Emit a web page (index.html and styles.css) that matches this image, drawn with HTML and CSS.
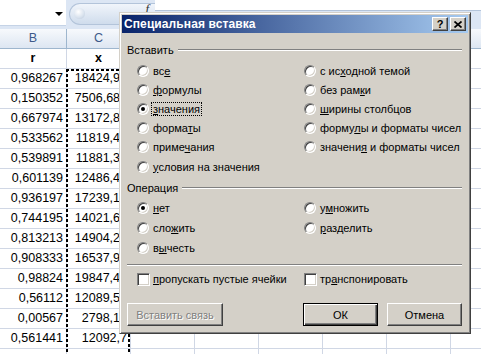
FILE: index.html
```html
<!DOCTYPE html>
<html lang="ru">
<head>
<meta charset="utf-8">
<title>Специальная вставка</title>
<link rel="stylesheet" href="styles.css">
</head>
<body>
<div class="sheet">
  <div class="topbar">
    <div class="namebox"><span class="dd"></span></div>
    <div class="fxbar"><span class="knob"></span><span class="fx">f</span></div>
    <div class="formula"></div>
  </div>
  <div class="row head">
    <div class="c cb">B</div><div class="c cc">C</div><div class="c"></div><div class="c"></div><div class="c"></div><div class="c"></div><div class="c"></div><div class="c"></div>
  </div>
  <div class="row"><div class="c cb bold">r</div><div class="c cc bold">x</div><div class="c"></div><div class="c"></div><div class="c"></div><div class="c"></div><div class="c"></div><div class="c"></div></div>
  <div class="row"><div class="c cb">0,968267</div><div class="c cc">18424,92</div><div class="c"></div><div class="c"></div><div class="c"></div><div class="c"></div><div class="c"></div><div class="c"></div></div>
  <div class="row"><div class="c cb">0,150352</div><div class="c cc">7506,683</div><div class="c"></div><div class="c"></div><div class="c"></div><div class="c"></div><div class="c"></div><div class="c"></div></div>
  <div class="row"><div class="c cb">0,667974</div><div class="c cc">13172,81</div><div class="c"></div><div class="c"></div><div class="c"></div><div class="c"></div><div class="c"></div><div class="c"></div></div>
  <div class="row"><div class="c cb">0,533562</div><div class="c cc">11819,45</div><div class="c"></div><div class="c"></div><div class="c"></div><div class="c"></div><div class="c"></div><div class="c"></div></div>
  <div class="row"><div class="c cb">0,539891</div><div class="c cc">11881,37</div><div class="c"></div><div class="c"></div><div class="c"></div><div class="c"></div><div class="c"></div><div class="c"></div></div>
  <div class="row"><div class="c cb">0,601139</div><div class="c cc">12486,42</div><div class="c"></div><div class="c"></div><div class="c"></div><div class="c"></div><div class="c"></div><div class="c"></div></div>
  <div class="row"><div class="c cb">0,936197</div><div class="c cc">17239,16</div><div class="c"></div><div class="c"></div><div class="c"></div><div class="c"></div><div class="c"></div><div class="c"></div></div>
  <div class="row"><div class="c cb">0,744195</div><div class="c cc">14021,61</div><div class="c"></div><div class="c"></div><div class="c"></div><div class="c"></div><div class="c"></div><div class="c"></div></div>
  <div class="row"><div class="c cb">0,813213</div><div class="c cc">14904,25</div><div class="c"></div><div class="c"></div><div class="c"></div><div class="c"></div><div class="c"></div><div class="c"></div></div>
  <div class="row"><div class="c cb">0,908333</div><div class="c cc">16537,95</div><div class="c"></div><div class="c"></div><div class="c"></div><div class="c"></div><div class="c"></div><div class="c"></div></div>
  <div class="row"><div class="c cb">0,98824</div><div class="c cc">19847,48</div><div class="c"></div><div class="c"></div><div class="c"></div><div class="c"></div><div class="c"></div><div class="c"></div></div>
  <div class="row"><div class="c cb">0,56112</div><div class="c cc">12089,53</div><div class="c"></div><div class="c"></div><div class="c"></div><div class="c"></div><div class="c"></div><div class="c"></div></div>
  <div class="row"><div class="c cb">0,00567</div><div class="c cc">2798,15</div><div class="c"></div><div class="c"></div><div class="c"></div><div class="c"></div><div class="c"></div><div class="c"></div></div>
  <div class="row"><div class="c cb">0,561441</div><div class="c cc">12092,7</div><div class="c"></div><div class="c"></div><div class="c"></div><div class="c"></div><div class="c"></div><div class="c"></div></div>
  <div class="row"><div class="c cb"></div><div class="c cc"></div><div class="c"></div><div class="c"></div><div class="c"></div><div class="c"></div><div class="c"></div><div class="c"></div></div>
</div>
<div class="ants"></div>

<div class="dialog">
  <div class="titlebar">
    <span class="ttext">Специальная вставка</span>
    <span class="tbtn help">?</span>
    <span class="tbtn close"><svg width="8" height="7" viewBox="0 0 8 7"><path d="M0.5 0.5 L7.5 6.5 M7.5 0.5 L0.5 6.5" stroke="#000" stroke-width="1.7" fill="none"/></svg></span>
  </div>
  <div class="body">
    <div class="legend">Вставить</div>
    <div class="opts paste">
      <label class="opt"><span class="radio"></span><span>вс<u>е</u></span></label>
      <label class="opt"><span class="radio"></span><span><u>ф</u>ормулы</span></label>
      <label class="opt"><span class="radio on"></span><span class="focus"><u>з</u>начения</span></label>
      <label class="opt"><span class="radio"></span><span>форма<u>т</u>ы</span></label>
      <label class="opt"><span class="radio"></span><span>приме<u>ч</u>ания</span></label>
      <label class="opt"><span class="radio"></span><span><u>у</u>словия на значения</span></label>
      <label class="opt"><span class="radio"></span><span>с ис<u>х</u>одной темой</span></label>
      <label class="opt"><span class="radio"></span><span>без рам<u>к</u>и</span></label>
      <label class="opt"><span class="radio"></span><span><u>ш</u>ирины столбцов</span></label>
      <label class="opt"><span class="radio"></span><span>форму<u>л</u>ы и форматы чисел</span></label>
      <label class="opt"><span class="radio"></span><span>значени<u>я</u> и форматы чисел</span></label>
    </div>
    <div class="legend op">Операция</div>
    <div class="opts ops">
      <label class="opt"><span class="radio on"></span><span><u>н</u>ет</span></label>
      <label class="opt"><span class="radio"></span><span>сло<u>ж</u>ить</span></label>
      <label class="opt"><span class="radio"></span><span>в<u>ы</u>честь</span></label>
      <label class="opt"><span class="radio"></span><span>у<u>м</u>ножить</span></label>
      <label class="opt"><span class="radio"></span><span><u>р</u>азделить</span></label>
    </div>
    <div class="sep"></div>
    <div class="opts checks">
      <label class="opt chk"><span class="box"></span><span><u>п</u>ропускать пустые ячейки</span></label>
      <label class="opt chk"><span class="box"></span><span>тр<u>а</u>нспонировать</span></label>
    </div>
    <div class="buttons">
      <span class="btn wide disabled">Вставить связь</span>
      <span class="btn default">ОК</span>
      <span class="btn">Отмена</span>
    </div>
  </div>
</div>
</body>
</html>
```

FILE: styles.css
```css
html, body {
  margin: 0;
  padding: 0;
}
body {
  width: 481px;
  height: 354px;
  overflow: hidden;
  background: #ffffff;
  font-family: "Liberation Sans", Arial, sans-serif;
}

/* ---------- spreadsheet ---------- */
.sheet {
  width: 481px;
  overflow: hidden;
}
.topbar {
  display: flex;
  height: 29px;
  background: #dce6f4;
}
.namebox {
  width: 66px;
  height: 26px;
  background: #fff;
  border-bottom: 1px solid #c5d3e6;
  box-sizing: border-box;
  display: flex;
  align-items: center;
  justify-content: flex-end;
  padding-right: 3px;
}
.dd {
  width: 0;
  height: 0;
  border-left: 4px solid transparent;
  border-right: 4px solid transparent;
  border-top: 4px solid #000;
  margin-top: 2px;
}
.fxbar {
  margin-left: 3px;
  margin-top: 3px;
  width: 86px;
  height: 22px;
  border-radius: 11px 0 0 11px;
  background: linear-gradient(#f1f5fb, #cfdcec);
  border: 1px solid #b3c4da;
  border-right: none;
  box-sizing: border-box;
  display: flex;
  align-items: flex-start;
}
.knob {
  width: 11px;
  height: 11px;
  border-radius: 50%;
  margin: 4px 0 0 4px;
  background: radial-gradient(circle at 40% 35%, #ffffff, #dbe4ef 55%, #b7c6d9);
}
.fx {
  margin-left: auto;
  margin-right: 6px;
  margin-top: -3px;
  font: italic 13px "Liberation Serif", serif;
  color: #333;
}
.formula {
  flex: 1;
  height: 11px;
  background: #fff;
  border-bottom: 1px solid #b3c4da;
  box-sizing: border-box;
}

.row {
  display: flex;
  height: 20px;
  box-sizing: border-box;
  border-bottom: 1px solid #d0d7e5;
  font-size: 12.5px;
  line-height: 19px;
  color: #000;
}
.c {
  flex: none;
  width: 64px;
  box-sizing: border-box;
  border-right: 1px solid #d0d7e5;
  text-align: right;
  padding-right: 3px;
  white-space: nowrap;
  overflow: hidden;
}
.cb { width: 67px; }
.cc { width: 64px; }
.bold {
  font-weight: bold;
  text-align: center;
  padding-right: 0;
}
.row.head {
  background: linear-gradient(#f7f9fc, #dde6f2);
  border-bottom: 1px solid #9eb6ce;
  color: #3d5a8a;
}
.row.head .c {
  border-right: 1px solid #9eb6ce;
  text-align: center;
  padding-right: 0;
}

.ants {
  position: absolute;
  left: 66px;
  top: 69px;
  width: 64px;
  height: 300px;
  background:
    repeating-linear-gradient(to right, #000 0 3px, transparent 3px 5px) left top / 100% 2px no-repeat,
    repeating-linear-gradient(to bottom, #000 0 3px, transparent 3px 5px) left top / 2px 100% no-repeat,
    repeating-linear-gradient(to bottom, #000 0 3px, transparent 3px 5px) right top / 2px 100% no-repeat;
}

/* ---------- dialog ---------- */
.dialog {
  position: absolute;
  left: 119px;
  top: 12px;
  width: 352px;
  height: 322px;
  box-sizing: border-box;
  background: #d4d0c8;
  border: 1px solid;
  border-color: #d4d0c8 #404040 #404040 #d4d0c8;
  box-shadow: inset 1px 1px #ffffff, inset -1px -1px #808080;
  padding: 2px;
  display: flex;
  flex-direction: column;
  font-size: 11px;
  color: #000;
}
.titlebar {
  height: 18px;
  flex: none;
  display: flex;
  align-items: center;
  padding: 0 2px 0 2px;
  background: linear-gradient(to right, #0a246a, #a6caf0);
}
.ttext {
  flex: 1;
  color: #fff;
  font-weight: bold;
  font-size: 12px;
  letter-spacing: 0.1px;
}
.tbtn {
  width: 16px;
  height: 14px;
  box-sizing: border-box;
  background: #d4d0c8;
  border: 1px solid;
  border-color: #ffffff #404040 #404040 #ffffff;
  box-shadow: inset -1px -1px #808080;
  display: flex;
  align-items: center;
  justify-content: center;
  font-weight: bold;
  font-size: 11px;
  line-height: 1;
}
.help { margin-right: 2px; }

.body {
  flex: 1;
  padding: 0 6px 0 5px;
}
.legend {
  display: flex;
  align-items: center;
  height: 14px;
  margin-top: 10px;
}
.legend::after {
  content: "";
  flex: 1;
  border-top: 1px solid #808080;
  border-bottom: 1px solid #ffffff;
  margin-left: 4px;
}
.legend.op { margin-top: 5px; }

.opts {
  display: grid;
  grid-auto-flow: column;
  grid-template-columns: 167px 1fr;
  padding-left: 10px;
}
.paste {
  grid-template-rows: repeat(6, 19.2px);
  margin-top: 4px;
}
.ops {
  grid-template-rows: repeat(3, 20px);
  margin-top: 3px;
}
.opt {
  display: flex;
  align-items: center;
  gap: 4px;
  white-space: nowrap;
}
.radio {
  flex: none;
  width: 12px;
  height: 12px;
  box-sizing: border-box;
  border-radius: 50%;
  border: 1px solid;
  border-color: #808080 #ffffff #ffffff #808080;
  background: #fff;
  box-shadow: inset 1px 1px #404040, inset -1px -1px #d4d0c8;
  display: flex;
  align-items: center;
  justify-content: center;
}
.radio.on::after {
  content: "";
  width: 4px;
  height: 4px;
  border-radius: 50%;
  background: #000;
}
.focus {
  outline: 1px dotted #000;
  outline-offset: 0;
  padding: 0 1px;
  margin-left: -1px;
}
u { text-decoration-thickness: 1px; text-underline-offset: 1px; }

.sep {
  margin-top: 6px;
  border-top: 1px solid #808080;
  border-bottom: 1px solid #ffffff;
}
.checks {
  margin-top: 6px;
  height: 14px;
}
.chk { gap: 3px; }
.box {
  flex: none;
  width: 13px;
  height: 13px;
  box-sizing: border-box;
  border: 1px solid;
  border-color: #808080 #ffffff #ffffff #808080;
  background: #fff;
  box-shadow: inset 1px 1px #404040, inset -1px -1px #d4d0c8;
}

.buttons {
  display: flex;
  margin-top: 17px;
}
.btn {
  width: 75px;
  height: 23px;
  box-sizing: border-box;
  background: #d4d0c8;
  border: 1px solid;
  border-color: #ffffff #404040 #404040 #ffffff;
  box-shadow: inset -1px -1px #808080;
  display: flex;
  align-items: center;
  justify-content: center;
}
.btn.wide {
  width: 96px;
  margin-right: auto;
}
.btn.disabled {
  color: #808080;
  text-shadow: 1px 1px #ffffff;
}
.btn.default {
  margin-right: 9px;
  border-color: #000;
  box-shadow: inset 1px 1px #ffffff, inset -1px -1px #404040, inset -2px -2px #808080;
}
```
